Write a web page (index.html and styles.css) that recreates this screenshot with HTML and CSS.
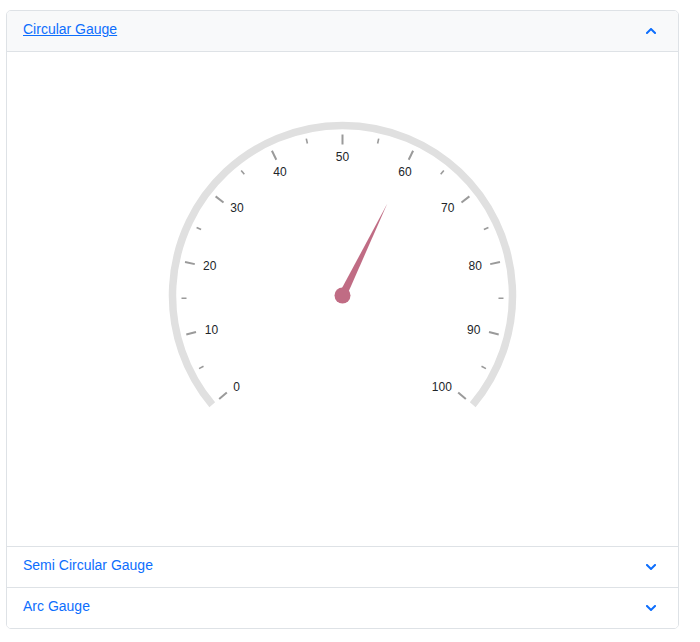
FILE: index.html
```html
<!DOCTYPE html>
<html lang="en">
<head>
<meta charset="utf-8">
<title>Gauges</title>
<link rel="stylesheet" href="styles.css">
</head>
<body>
<div class="page">
  <div class="accordion">
    <div class="acc-item">
      <div class="acc-header open">
        <a class="acc-title underline" href="#">Circular Gauge</a>
        <svg class="chev" width="10" height="6" viewBox="0 0 10 6"><polyline points="1,5 5,1 9,5"/></svg>
      </div>
      <div class="acc-body">
        <svg class="gauge" width="671" height="494" viewBox="0 0 671 494">
          <g transform="translate(335.5 243.5)">
            <path class="ring" d="M-130.23 109.27 A170 170 0 1 1 130.23 109.27"/>
            <g class="major">
              <line y1="-161" y2="-151" transform="rotate(230)"/>
              <line y1="-161" y2="-151" transform="rotate(256)"/>
              <line y1="-161" y2="-151" transform="rotate(282)"/>
              <line y1="-161" y2="-151" transform="rotate(308)"/>
              <line y1="-161" y2="-151" transform="rotate(334)"/>
              <line y1="-161" y2="-151" transform="rotate(360)"/>
              <line y1="-161" y2="-151" transform="rotate(386)"/>
              <line y1="-161" y2="-151" transform="rotate(412)"/>
              <line y1="-161" y2="-151" transform="rotate(438)"/>
              <line y1="-161" y2="-151" transform="rotate(464)"/>
              <line y1="-161" y2="-151" transform="rotate(490)"/>
            </g>
            <g class="minor">
              <line y1="-161" y2="-156" transform="rotate(243)"/>
              <line y1="-161" y2="-156" transform="rotate(269)"/>
              <line y1="-161" y2="-156" transform="rotate(295)"/>
              <line y1="-161" y2="-156" transform="rotate(321)"/>
              <line y1="-161" y2="-156" transform="rotate(347)"/>
              <line y1="-161" y2="-156" transform="rotate(373)"/>
              <line y1="-161" y2="-156" transform="rotate(399)"/>
              <line y1="-161" y2="-156" transform="rotate(425)"/>
              <line y1="-161" y2="-156" transform="rotate(451)"/>
              <line y1="-161" y2="-156" transform="rotate(477)"/>
            </g>
          </g>
          <g class="labels">
            <text x="229.7" y="339">0</text>
            <text x="204.5" y="282.3">10</text>
            <text x="202.8" y="218.3">20</text>
            <text x="230" y="160.3">30</text>
            <text x="273" y="124">40</text>
            <text x="335.5" y="109">50</text>
            <text x="398" y="124">60</text>
            <text x="440.8" y="160.3">70</text>
            <text x="468.2" y="218.3">80</text>
            <text x="466.7" y="282.3">90</text>
            <text x="434.8" y="339">100</text>
          </g>
          <g transform="translate(335.5 243.5)">
            <polygon class="needle" points="-4,0 4,0 0,-102" transform="rotate(26)"/>
            <circle class="cap" r="8"/>
          </g>
        </svg>
      </div>
    </div>
    <div class="acc-item">
      <div class="acc-header">
        <a class="acc-title" href="#">Semi Circular Gauge</a>
        <svg class="chev" width="10" height="6" viewBox="0 0 10 6"><polyline points="1,1 5,5 9,1"/></svg>
      </div>
    </div>
    <div class="acc-item">
      <div class="acc-header">
        <a class="acc-title" href="#">Arc Gauge</a>
        <svg class="chev" width="10" height="6" viewBox="0 0 10 6"><polyline points="1,1 5,5 9,1"/></svg>
      </div>
    </div>
  </div>
</div>
</body>
</html>
```
FILE: styles.css
```css
html, body {
  margin: 0;
  padding: 0;
  background: #ffffff;
}

body {
  font-family: "Liberation Sans", Arial, sans-serif;
  font-size: 14px;
  color: #212529;
}

.page {
  padding: 10px 0 0 6px;
}

.accordion {
  width: 673px;
  box-sizing: border-box;
  border: 1px solid #dee2e6;
  border-radius: 5px;
  overflow: hidden;
  background: #ffffff;
}

.acc-item + .acc-item {
  border-top: 1px solid #dee2e6;
}

.acc-header {
  height: 40px;
  box-sizing: border-box;
  display: flex;
  align-items: center;
  justify-content: space-between;
  padding: 0 22px 4px 16px;
  background: #ffffff;
}

.acc-header.open {
  height: 41px;
  background: #f8f9fa;
  border-bottom: 1px solid #dee2e6;
}

.acc-title {
  color: #0d6efd;
  text-decoration: none;
  font-size: 14px;
  line-height: 16px;
}

.acc-title.underline {
  text-decoration: underline;
}

.chev {
  display: block;
  margin-top: 4px;
}

.chev polyline {
  fill: none;
  stroke: #0d6efd;
  stroke-width: 2;
  stroke-linecap: square;
}

.acc-body {
  height: 494px;
}

.gauge {
  display: block;
}

.ring {
  fill: none;
  stroke: #e0e0e0;
  stroke-width: 7.5;
}

.major line {
  stroke: #9a9a9a;
  stroke-width: 2;
}

.minor line {
  stroke: #9a9a9a;
  stroke-width: 1.6;
}

.labels text {
  font-family: "Liberation Sans", Arial, sans-serif;
  font-size: 12px;
  fill: #212529;
  text-anchor: middle;
}

.needle,
.cap {
  fill: #c06c84;
}
```
